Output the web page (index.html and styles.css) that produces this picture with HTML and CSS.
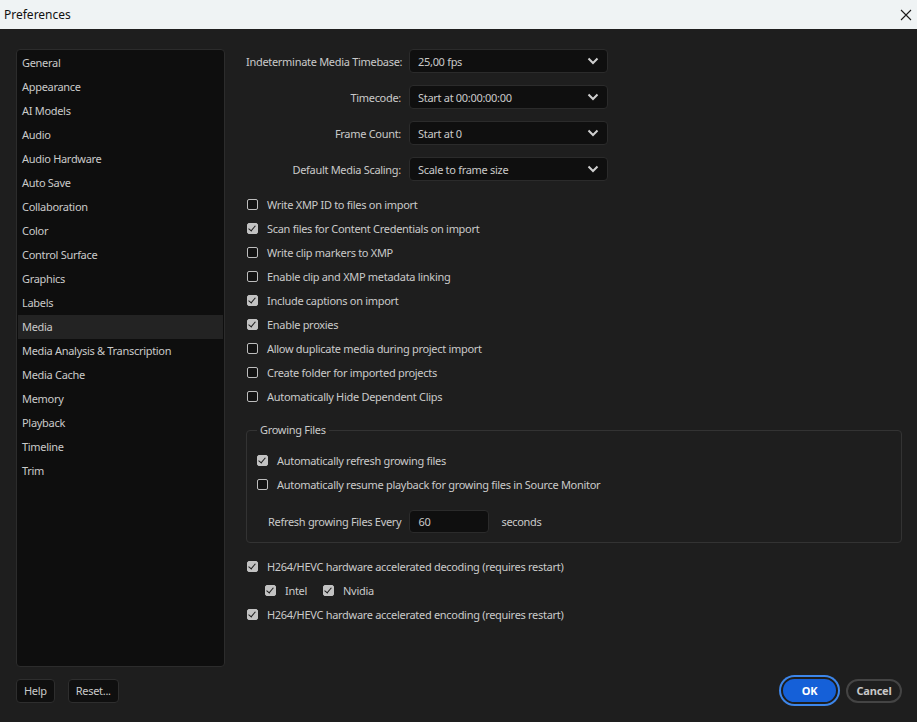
FILE: index.html
```html
<!DOCTYPE html>
<html>
<head>
<meta charset="utf-8">
<link rel="stylesheet" href="styles.css">
</head>
<body>
<div class="titlebar">
  <span class="title">Preferences</span>
  <svg class="close" width="12" height="12" viewBox="0 0 12 12"><path d="M1 1L11 11M11 1L1 11" stroke="#1a1a1a" stroke-width="1.1" fill="none"/></svg>
</div>
<div class="main">
  <ul class="sidebar">
    <li>General</li>
    <li>Appearance</li>
    <li>AI Models</li>
    <li>Audio</li>
    <li>Audio Hardware</li>
    <li>Auto Save</li>
    <li>Collaboration</li>
    <li>Color</li>
    <li>Control Surface</li>
    <li>Graphics</li>
    <li>Labels</li>
    <li class="active">Media</li>
    <li>Media Analysis &amp; Transcription</li>
    <li>Media Cache</li>
    <li>Memory</li>
    <li>Playback</li>
    <li>Timeline</li>
    <li>Trim</li>
  </ul>
  <div class="content">
    <div class="fields">
      <label class="flabel">Indeterminate Media Timebase:</label>
      <div class="select"><span>25,00 fps</span><svg width="12" height="8" viewBox="0 0 12 8"><path d="M1.5 1.5L6 6L10.5 1.5" stroke="#cfcfcf" stroke-width="2" fill="none"/></svg></div>
      <label class="flabel">Timecode:</label>
      <div class="select"><span>Start at 00:00:00:00</span><svg width="12" height="8" viewBox="0 0 12 8"><path d="M1.5 1.5L6 6L10.5 1.5" stroke="#cfcfcf" stroke-width="2" fill="none"/></svg></div>
      <label class="flabel">Frame Count:</label>
      <div class="select"><span>Start at 0</span><svg width="12" height="8" viewBox="0 0 12 8"><path d="M1.5 1.5L6 6L10.5 1.5" stroke="#cfcfcf" stroke-width="2" fill="none"/></svg></div>
      <label class="flabel">Default Media Scaling:</label>
      <div class="select"><span>Scale to frame size</span><svg width="12" height="8" viewBox="0 0 12 8"><path d="M1.5 1.5L6 6L10.5 1.5" stroke="#cfcfcf" stroke-width="2" fill="none"/></svg></div>
    </div>
    <div class="checks">
      <div class="row"><span class="cb"></span>Write XMP ID to files on import</div>
      <div class="row"><span class="cb on"></span>Scan files for Content Credentials on import</div>
      <div class="row"><span class="cb"></span>Write clip markers to XMP</div>
      <div class="row"><span class="cb"></span>Enable clip and XMP metadata linking</div>
      <div class="row"><span class="cb on"></span>Include captions on import</div>
      <div class="row"><span class="cb on"></span>Enable proxies</div>
      <div class="row"><span class="cb"></span>Allow duplicate media during project import</div>
      <div class="row"><span class="cb"></span>Create folder for imported projects</div>
      <div class="row"><span class="cb"></span>Automatically Hide Dependent Clips</div>
    </div>
    <fieldset class="group">
      <legend>Growing Files</legend>
      <div class="row"><span class="cb on"></span>Automatically refresh growing files</div>
      <div class="row"><span class="cb"></span>Automatically resume playback for growing files in Source Monitor</div>
      <div class="refresh">
        <span class="rlabel">Refresh growing Files Every</span>
        <div class="input">60</div>
        <span>seconds</span>
      </div>
    </fieldset>
    <div class="checks hw">
      <div class="row"><span class="cb on"></span>H264/HEVC hardware accelerated decoding (requires restart)</div>
      <div class="row sub">
        <span class="cb on"></span><span class="vendor">Intel</span>
        <span class="cb on"></span><span>Nvidia</span>
      </div>
      <div class="row"><span class="cb on"></span>H264/HEVC hardware accelerated encoding (requires restart)</div>
    </div>
  </div>
</div>
<div class="footer">
  <div class="left">
    <button class="btn">Help</button>
    <button class="btn">Reset...</button>
  </div>
  <div class="right">
    <button class="pill ok">OK</button>
    <button class="pill cancel">Cancel</button>
  </div>
</div>
</body>
</html>
```
FILE: styles.css
```css
* { box-sizing: border-box; }
html, body { margin: 0; padding: 0; }
body {
  width: 917px;
  height: 722px;
  background: #1e1e1e;
  font-family: "Noto Sans", "Open Sans", sans-serif;
  font-size: 11px;
  letter-spacing: -0.3px;
  color: #cacaca;
  overflow: hidden;
  white-space: nowrap;
}
.titlebar {
  height: 29px;
  background: #eff3f4;
  display: flex;
  align-items: center;
  justify-content: space-between;
  padding: 0 4px 0 4px;
  letter-spacing: 0;
}
.title { font-size: 12px; color: #111; }
.close { margin-right: 1px; }
.main {
  display: flex;
  gap: 21px;
  padding: 20px 15px 0 16px;
  height: 638px;
}
.sidebar {
  list-style: none;
  margin: 0;
  padding: 1px 1px;
  width: 209px;
  height: 618px;
  background: #0e0e0e;
  border: 1px solid #2c2c2c;
  border-radius: 4px;
}
.sidebar li {
  height: 24px;
  line-height: 24px;
  padding-left: 4px;
}
.sidebar li.active { background: #232323; }
.content { flex: 1; display: flex; flex-direction: column; }
.fields {
  display: grid;
  grid-template-columns: 155px 199px;
  column-gap: 8px;
  row-gap: 12px;
  align-items: center;
}
.flabel { text-align: right; }
.select {
  height: 24px;
  background: #0f0f0f;
  border: 1px solid #2b2b2b;
  border-radius: 4px;
  display: flex;
  align-items: center;
  justify-content: space-between;
  padding: 0 8px 0 8px;
}
.checks { margin-top: 11px; }
.row {
  height: 24px;
  display: flex;
  align-items: center;
  padding-left: 1px;
}
.cb {
  width: 11px;
  height: 11px;
  border: 1.6px solid #bdbdbd;
  border-radius: 2px;
  background: #121212;
  margin-right: 9px;
  flex: none;
  position: relative;
}
.cb.on {
  background: #c2c2c2;
  border-color: #c2c2c2;
}
.cb.on::after {
  content: "";
  position: absolute;
  left: 2px;
  top: 0px;
  width: 3px;
  height: 6px;
  border-right: 1.6px solid #1a1a1a;
  border-bottom: 1.6px solid #1a1a1a;
  transform: rotate(40deg);
}
.group {
  margin: 15px 0 0 0;
  padding: 11px 10px 9px 10px;
  border: 1px solid #333;
  border-radius: 4px;
  min-width: 0;
}
.group legend {
  padding: 0 3px;
  margin-left: 0px;
  line-height: 14px;
}
.group .row { padding-left: 0; }
.refresh {
  display: flex;
  align-items: center;
  margin-top: 14px;
  padding-left: 11px;
}
.rlabel { margin-right: 8px; }
.input {
  width: 80px;
  height: 23px;
  background: #0f0f0f;
  border: 1px solid #2b2b2b;
  border-radius: 4px;
  padding-left: 8px;
  line-height: 21px;
  margin-right: 12px;
}
.hw { margin-top: 11px; }
.row.sub { padding-left: 19px; }
.vendor { margin-right: 16px; }
.footer {
  display: flex;
  justify-content: space-between;
  align-items: center;
  padding: 0 15px 0 16px;
  margin-top: 10px;
}
.left { display: flex; gap: 13px; }
.btn {
  height: 24px;
  padding: 0 7px;
  background: #0f0f0f;
  border: 1px solid #2e2e2e;
  border-radius: 4px;
  color: #cacaca;
  font-family: inherit;
  font-size: 11px;
  letter-spacing: -0.3px;
}
.right { display: flex; gap: 8px; align-items: center; }
.pill {
  font-family: inherit;
  font-size: 11px;
  font-weight: 700;
  border-radius: 14px;
  letter-spacing: -0.2px;
}
.ok {
  width: 57px;
  height: 27px;
  background: #1560d8;
  color: #fff;
  border: 2px solid #1e1e1e;
  box-shadow: 0 0 0 2px #3d86ea;
}
.cancel {
  width: 56px;
  height: 24px;
  background: transparent;
  color: #c8c8c8;
  border: 2px solid #444;
}
```
